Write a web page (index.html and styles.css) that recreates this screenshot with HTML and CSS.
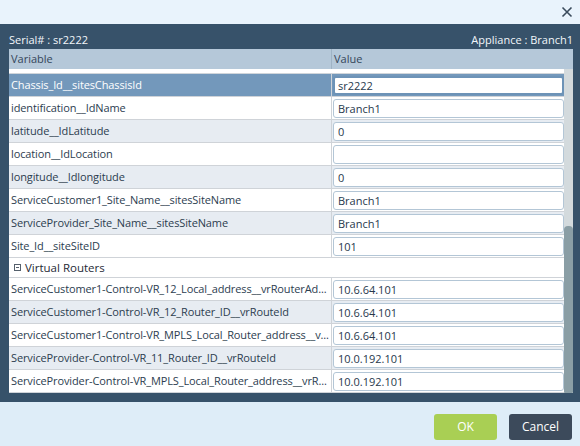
FILE: index.html
```html
<!DOCTYPE html>
<html lang="en">
<head>
<meta charset="UTF-8" />
<title>Appliance Variables</title>
<link rel="stylesheet" href="styles.css">
</head>
<body>

<div class="topbar">
  <svg class="close" width="12" height="12" viewBox="0 0 12 12">
    <path d="M1.5 1.5 L10.5 10.5 M10.5 1.5 L1.5 10.5" stroke="#3b4b5c" stroke-width="1.6" fill="none" />
  </svg>
</div>

<div class="panel">
  <div class="meta">
    <span>Serial# : sr2222</span>
    <span>Appliance : Branch1</span>
  </div>

  <div class="grid">
    <div class="head">
      <div class="hcell var">Variable</div>
      <div class="hcell">Value</div>
    </div>

    <div class="body">
      <div class="rows">
        <div class="spacer"></div>

        <div class="row selected">
          <div class="cell var">Chassis_Id__sitesChassisId</div>
          <div class="cell val"><input type="text" value="sr2222" /></div>
        </div>
        <div class="row">
          <div class="cell var">identification__IdName</div>
          <div class="cell val"><input type="text" value="Branch1" /></div>
        </div>
        <div class="row alt">
          <div class="cell var">latitude__IdLatitude</div>
          <div class="cell val"><input type="text" value="0" /></div>
        </div>
        <div class="row">
          <div class="cell var">location__IdLocation</div>
          <div class="cell val"><input type="text" value="" /></div>
        </div>
        <div class="row alt">
          <div class="cell var">longitude__Idlongitude</div>
          <div class="cell val"><input type="text" value="0" /></div>
        </div>
        <div class="row">
          <div class="cell var">ServiceCustomer1_Site_Name__sitesSiteName</div>
          <div class="cell val"><input type="text" value="Branch1" /></div>
        </div>
        <div class="row alt">
          <div class="cell var">ServiceProvider_Site_Name__sitesSiteName</div>
          <div class="cell val"><input type="text" value="Branch1" /></div>
        </div>
        <div class="row">
          <div class="cell var">Site_Id__siteSiteID</div>
          <div class="cell val"><input type="text" value="101" /></div>
        </div>

        <div class="group">
          <span class="toggle"></span>
          Virtual Routers
        </div>

        <div class="row">
          <div class="cell var">ServiceCustomer1-Control-VR_12_Local_address__vrRouterAd...</div>
          <div class="cell val"><input type="text" value="10.6.64.101" /></div>
        </div>
        <div class="row alt">
          <div class="cell var">ServiceCustomer1-Control-VR_12_Router_ID__vrRouteId</div>
          <div class="cell val"><input type="text" value="10.6.64.101" /></div>
        </div>
        <div class="row">
          <div class="cell var">ServiceCustomer1-Control-VR_MPLS_Local_Router_address__v...</div>
          <div class="cell val"><input type="text" value="10.6.64.101" /></div>
        </div>
        <div class="row alt">
          <div class="cell var">ServiceProvider-Control-VR_11_Router_ID__vrRouteId</div>
          <div class="cell val"><input type="text" value="10.0.192.101" /></div>
        </div>
        <div class="row">
          <div class="cell var">ServiceProvider-Control-VR_MPLS_Local_Router_address__vrR...</div>
          <div class="cell val"><input type="text" value="10.0.192.101" /></div>
        </div>
      </div>

      <div class="track"><div class="thumb"></div></div>
    </div>
  </div>
</div>

<div class="footer">
  <button class="btn ok">OK</button>
  <button class="btn cancel">Cancel</button>
</div>

</body>
</html>
```

FILE: styles.css
```css
/* appliance variables dialog */
body {
  margin: 0;
  width: 580px;
  height: 446px;
  overflow: hidden;
  font-family: 'Open Sans', 'Noto Sans', sans-serif;
  font-size: 11px;
  background: #deedf8;
}
.topbar {
  height: 24px;
  background: #e9f3fc;
  display: flex;
  justify-content: flex-end;
  align-items: center;
  padding-right: 7px;
}
.close {
  display: block;
}
.panel {
  background: #37526a;
  padding: 0 7px 9px 9px;
}
.meta {
  height: 25px;
  display: flex;
  justify-content: space-between;
  align-items: flex-end;
  color: #f2f6fa;
  font-size: 11px;
  line-height: 16px;
  padding-bottom: 1px;
  box-sizing: border-box;
}
.head {
  display: flex;
  height: 20px;
  background: #b5c8d9;
  color: #34465a;
  line-height: 20px;
}
.hcell {
  padding-left: 2px;
  flex: 1;
}
.hcell.var {
  flex: none;
  width: 320px;
  border-right: 1px solid #9fb3c5;
}
.body {
  display: flex;
  height: 324px;
  background: #fff;
}
.rows {
  width: 555px;
  overflow: hidden;
}
.spacer {
  height: 5px;
  border-bottom: 1px solid #d0d5da;
  box-sizing: border-box;
}
.row {
  display: flex;
  height: 23px;
  border-bottom: 1px solid #cfd3d8;
  box-sizing: border-box;
  background: #fff;
}
.row.alt {
  background: #e7ecf2;
}
.row.selected {
  background: #7398bb;
}
.cell {
  line-height: 22px;
}
.cell.var {
  width: 320px;
  padding-left: 2px;
  border-right: 1px solid #cfd3d8;
  color: #2c3d4f;
  letter-spacing: -0.12px;
  white-space: nowrap;
  overflow: hidden;
}
.row.selected .cell.var {
  color: #fff;
}
.cell.val {
  flex: 1;
  padding: 2px 0 0 1px;
  overflow: hidden;
}
.cell.val input {
  display: block;
  width: 100%;
  height: 19px;
  margin: 0;
  border: 1px solid #b3c6d6;
  border-radius: 3px;
  padding: 0 4px;
  box-sizing: border-box;
  font-family: 'Open Sans', 'Noto Sans', sans-serif;
  font-size: 11px;
  color: #27384c;
  background: #fff;
  outline: none;
}
.row.selected .cell.val input {
  border: 2px solid #6d93b7;
  padding-left: 3px;
}
.group {
  height: 20px;
  line-height: 19px;
  border-bottom: 1px solid #cfd3d8;
  box-sizing: border-box;
  padding-left: 5px;
  font-size: 11.5px;
  color: #1f2a36;
  display: flex;
  align-items: center;
  gap: 4px;
}
.toggle {
  width: 5px;
  height: 5px;
  border: 1px solid #55606c;
  position: relative;
}
.toggle::after {
  content: '';
  position: absolute;
  left: 1px;
  right: 1px;
  top: 2px;
  height: 1px;
  background: #55606c;
}
.track {
  width: 9px;
  background: #d3dadd;
  display: flex;
  flex-direction: column;
  justify-content: flex-end;
}
.thumb {
  height: 167px;
  background: #8a9ea5;
  border-radius: 4px 4px 1px 1px;
}
.footer {
  height: 44px;
  display: flex;
  justify-content: flex-end;
  align-items: center;
  gap: 12px;
  padding-right: 8px;
  padding-top: 5px;
  box-sizing: border-box;
}
.btn {
  width: 63px;
  height: 26px;
  border: none;
  border-radius: 3px;
  color: #fff;
  font-family: 'Open Sans', 'Noto Sans', sans-serif;
  font-size: 12px;
  cursor: pointer;
}
.btn.ok {
  background: #a9cf54;
}
.btn.cancel {
  background: #3c4a5b;
}
```
